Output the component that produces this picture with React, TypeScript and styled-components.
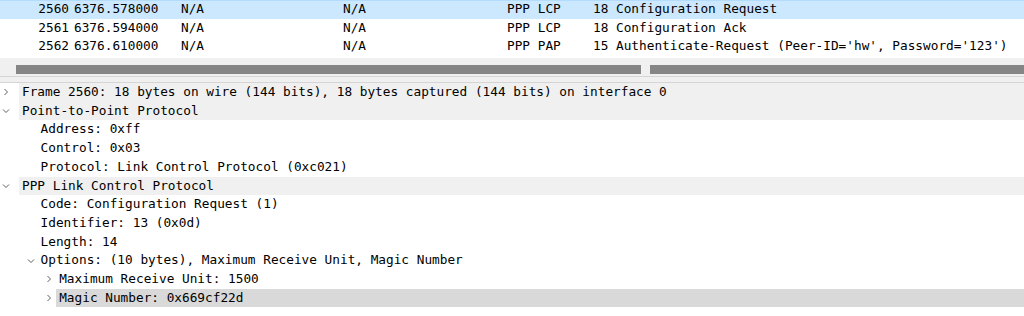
import React from "react";
import styled, { createGlobalStyle } from "styled-components";

const GlobalStyle = createGlobalStyle`
  html, body {
    margin: 0;
    padding: 0;
    background: #fff;
  }
  body {
    font-family: "DejaVu Sans Mono", "Liberation Mono", monospace;
    font-size: 12.75px;
    color: #000;
  }
`;

const ROW_H = 18.7;
const INDENT = 18.6;

const Page = styled.div`
  width: 1024px;
  height: 316px;
  overflow: hidden;
  display: flex;
  flex-direction: column;
  background: #fff;
`;

/* packet list */

const PacketList = styled.div`
  display: flex;
  flex-direction: column;
`;

const PacketRow = styled.div<{ selected: boolean }>`
  display: grid;
  grid-template-columns: 69px 112px 162px 164px 86px 23px 1fr;
  height: ${ROW_H}px;
  line-height: ${ROW_H}px;
  white-space: pre;
  background: ${props => (props.selected ? "#cce8ff" : "#fff")};
  box-shadow: ${props => (props.selected ? "inset 0 1px 0 #b3dcfc" : "none")};
`;

const Cell = styled.span<{ align?: "right" | "left"; pad?: number }>`
  text-align: ${props => props.align || "left"};
  padding-left: ${props => props.pad || 0}px;
  overflow: hidden;
`;

const ScrollArea = styled.div`
  height: 20px;
  box-sizing: border-box;
  padding: 7px 0 4px 16px;
  background: #f0f0f0;
  border-top: 2px solid #fff;
  display: flex;
`;

const Thumb = styled.div<{ width?: number }>`
  height: 9px;
  background: #858585;
  flex: ${props => (props.width ? `0 0 ${props.width}px` : "1")};
`;

const ThumbGap = styled.div`
  width: 9px;
  flex: 0 0 9px;
`;

const Splitter = styled.div`
  height: 7px;
  box-sizing: border-box;
  border-top: 1px solid #d5d5d5;
  border-bottom: 1px solid #d5d5d5;
  background: #f0f0f0;
`;

/* details tree */

const Tree = styled.div`
  display: flex;
  flex-direction: column;
`;

const TreeRow = styled.div<{ level: number }>`
  display: flex;
  height: ${ROW_H}px;
  line-height: ${ROW_H}px;
  padding-left: ${props => (props.level === 0 ? 2 : 5 + props.level * INDENT)}px;
`;

const Toggle = styled.span<{ level: number }>`
  width: ${props => (props.level === 0 ? 17 : 14)}px;
  flex: 0 0 ${props => (props.level === 0 ? 17 : 14)}px;
  display: flex;
  align-items: center;
  justify-content: ${props => (props.level === 0 ? "flex-start" : "center")};
`;

const Label = styled.span<{ top: boolean; selected: boolean }>`
  flex: 1;
  padding-left: 3px;
  white-space: pre;
  background: ${props =>
    props.selected ? "#d9d9d9" : props.top ? "#f0f0f0" : "transparent"};
`;

const Chevron: React.FC<{ open: boolean }> = ({ open }) => (
  <svg width="8" height="8" viewBox="0 0 8 8">
    {open ? (
      <path d="M1 2.5 L4 5.5 L7 2.5" fill="none" stroke="#5f5f5f" strokeWidth="1" />
    ) : (
      <path d="M2.5 1 L5.5 4 L2.5 7" fill="none" stroke="#5f5f5f" strokeWidth="1" />
    )}
  </svg>
);

type Packet = {
  no: string;
  time: string;
  src: string;
  dst: string;
  proto: string;
  len: string;
  info: string;
};

const packets: Packet[] = [
  { no: "2560", time: "6376.578000", src: "N/A", dst: "N/A", proto: "PPP LCP", len: "18", info: "Configuration Request" },
  { no: "2561", time: "6376.594000", src: "N/A", dst: "N/A", proto: "PPP LCP", len: "18", info: "Configuration Ack" },
  { no: "2562", time: "6376.610000", src: "N/A", dst: "N/A", proto: "PPP PAP", len: "15", info: "Authenticate-Request (Peer-ID='hw', Password='123')" }
];

type Node = {
  level: number;
  text: string;
  toggle?: "open" | "closed";
  selected?: boolean;
};

const nodes: Node[] = [
  { level: 0, toggle: "closed", text: "Frame 2560: 18 bytes on wire (144 bits), 18 bytes captured (144 bits) on interface 0" },
  { level: 0, toggle: "open", text: "Point-to-Point Protocol" },
  { level: 1, text: "Address: 0xff" },
  { level: 1, text: "Control: 0x03" },
  { level: 1, text: "Protocol: Link Control Protocol (0xc021)" },
  { level: 0, toggle: "open", text: "PPP Link Control Protocol" },
  { level: 1, text: "Code: Configuration Request (1)" },
  { level: 1, text: "Identifier: 13 (0x0d)" },
  { level: 1, text: "Length: 14" },
  { level: 1, toggle: "open", text: "Options: (10 bytes), Maximum Receive Unit, Magic Number" },
  { level: 2, toggle: "closed", text: "Maximum Receive Unit: 1500" },
  { level: 2, toggle: "closed", text: "Magic Number: 0x669cf22d", selected: true }
];

const App: React.FC = () => {
  const renderPackets = () =>
    packets.map((p, index) => (
      <PacketRow key={p.no} selected={index === 0}>
        <Cell align="right">{p.no}</Cell>
        <Cell pad={5}>{p.time}</Cell>
        <Cell>{p.src}</Cell>
        <Cell>{p.dst}</Cell>
        <Cell>{p.proto}</Cell>
        <Cell>{p.len}</Cell>
        <Cell>{p.info}</Cell>
      </PacketRow>
    ));

  const renderTree = () =>
    nodes.map((n, index) => (
      <TreeRow key={index} level={n.level}>
        <Toggle level={n.level}>
          {n.toggle && <Chevron open={n.toggle === "open"} />}
        </Toggle>
        <Label top={n.level === 0} selected={!!n.selected}>
          {n.text}
        </Label>
      </TreeRow>
    ));

  return (
    <Page>
      <GlobalStyle />
      <PacketList>{renderPackets()}</PacketList>
      <ScrollArea>
        <Thumb width={625} />
        <ThumbGap />
        <Thumb />
      </ScrollArea>
      <Splitter />
      <Tree>{renderTree()}</Tree>
    </Page>
  );
};

export default App;
